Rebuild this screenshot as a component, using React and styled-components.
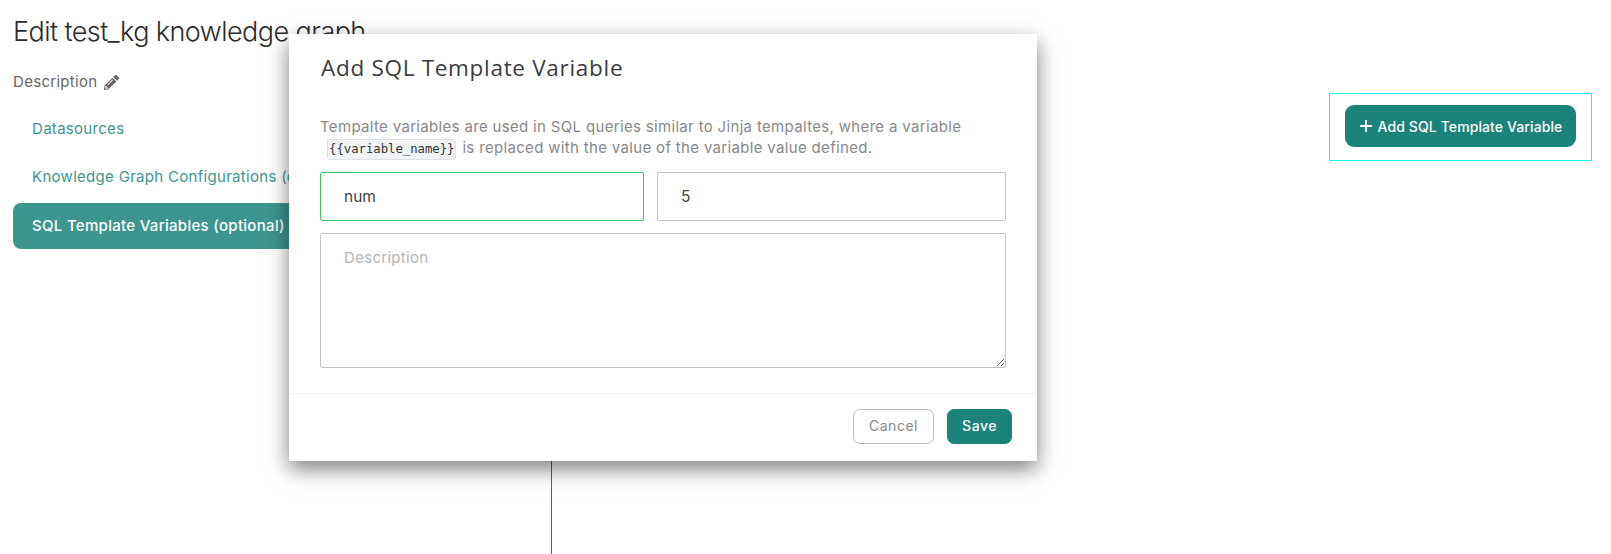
import styled, { createGlobalStyle } from 'styled-components'
import { Plus } from 'lucide-react'
import { FaPencilAlt } from 'react-icons/fa'

const colors = {
  primary: '#1b8377',
  tab: '#3d968d',
  link: '#3d968d',
  text: '#888888',
  border: '#c4c4c4',
}

const GlobalStyle = createGlobalStyle`
  html, body {
    margin: 0;
    padding: 0;
    background: #fff;
    font-family: Inter, 'Open Sans', sans-serif;
  }
  * {
    box-sizing: border-box;
  }
`

const Page = styled.div`
  position: relative;
  display: flex;
  width: 1611px;
  height: 554px;
  overflow: hidden;
`

const SidePanel = styled.div`
  display: flex;
  flex-direction: column;
  width: 551px;
  padding: 15px 0 0 13px;
`

const Title = styled.h1`
  margin: 0;
  color: #2c2c2c;
  font-size: 27px;
  line-height: 34px;
  font-weight: 300;
  letter-spacing: -0.57px;
  white-space: nowrap;
`

const DescriptionRow = styled.div`
  display: flex;
  align-items: center;
  gap: 7px;
  margin-top: 23px;
  color: #666;
  font-size: 15px;
  letter-spacing: 0.3px;
  line-height: 20px;
  svg {
    width: 15px;
    height: 15px;
  }
`

const Tabs = styled.div`
  display: flex;
  flex-direction: column;
  margin-top: 13px;
  width: 300px;
`

const Tab = styled.div`
  height: ${({ $active }) => ($active ? '46px' : '48px')};
  margin-top: ${({ $active }) => ($active ? '2px' : '0')};
  padding-left: 19px;
  border-radius: 8px;
  color: ${({ $active }) => ($active ? '#fff' : colors.link)};
  background: ${({ $active }) => ($active ? colors.tab : 'transparent')};
  font-size: 15px;
  font-weight: ${({ $active }) => ($active ? 500 : 400)};
  letter-spacing: 0.3px;
  line-height: ${({ $active }) => ($active ? '46px' : '48px')};
  white-space: nowrap;
`

const Canvas = styled.div`
  display: flex;
  flex: 1;
  justify-content: space-between;
`

const Connector = styled.div`
  align-self: flex-end;
  width: 1px;
  height: 94px;
  background: ${colors.primary};
`

const HighlightFrame = styled.div`
  align-self: flex-start;
  margin: 93px 19px 0 0;
  padding: 11px 15px 13px;
  border: 1px solid #19f5f5;
`

const AddButton = styled.button`
  display: flex;
  align-items: center;
  justify-content: center;
  gap: 3px;
  width: 231px;
  height: 42px;
  padding: 0 2px 0 0;
  border: 0;
  border-radius: 9px;
  background: ${colors.primary};
  color: #fff;
  font-family: inherit;
  font-size: 14px;
  font-weight: 500;
  letter-spacing: 0.1px;
`

const Modal = styled.div`
  position: absolute;
  top: 34px;
  left: 289px;
  display: flex;
  flex-direction: column;
  width: 748px;
  height: 427px;
  background: #fff;
  box-shadow: 0 8px 20px rgba(0, 0, 0, 0.5);
`

const ModalBody = styled.div`
  display: flex;
  flex: 1;
  flex-direction: column;
  padding: 0 31px;
`

const ModalTitle = styled.h2`
  margin: 17px 0 0 1px;
  color: #3c3c3c;
  font-family: 'Open Sans', sans-serif;
  font-size: 22.5px;
  line-height: 34px;
  font-weight: 400;
  letter-spacing: 0.7px;
`

const HelpText = styled.p`
  margin: 31px 0 0;
  color: ${colors.text};
  font-size: 15px;
  letter-spacing: 0.33px;
  line-height: 21px;
  white-space: nowrap;
`

const Code = styled.code`
  display: inline-block;
  margin: 0 6px 0 7px;
  padding: 0 1px;
  border: 1px solid #dcdfe3;
  border-radius: 3px;
  background: #f1f3f5;
  color: #333;
  font-family: 'DejaVu Sans Mono', monospace;
  font-size: 12.25px;
  letter-spacing: 0;
  line-height: 19px;
`

const FieldRow = styled.div`
  display: flex;
  gap: 13px;
  margin-top: 12px;
`

const TextInput = styled.input`
  flex: ${({ $valid }) => ($valid ? '0 0 324px' : '1')};
  min-width: 0;
  height: 49px;
  padding: 0 23px;
  border: 1px solid ${({ $valid }) => ($valid ? '#46c35f' : colors.border)};
  border-radius: 2px;
  outline: none;
  color: #444;
  font-family: inherit;
  font-size: 15.5px;
`

const TextArea = styled.textarea`
  display: block;
  width: 100%;
  height: 135px;
  margin-top: 12px;
  padding: 14px 23px;
  border: 1px solid ${colors.border};
  border-radius: 2px;
  outline: none;
  font-family: inherit;
  font-size: 15px;
  letter-spacing: 0.3px;
  &::placeholder {
    color: #b5b5b5;
  }
`

const ModalFooter = styled.div`
  display: flex;
  justify-content: flex-end;
  gap: 13px;
  height: 68px;
  padding: 15px 25px 0 0;
  border-top: 1px solid #f2f2f2;
`

const FooterButton = styled.button`
  width: ${({ $primary }) => ($primary ? '65px' : '81px')};
  height: 35px;
  padding: 0 0 2px;
  border: 1px solid ${({ $primary }) => ($primary ? colors.primary : '#bdbdbd')};
  border-radius: 7px;
  background: ${({ $primary }) => ($primary ? colors.primary : '#fff')};
  color: ${({ $primary }) => ($primary ? '#fff' : colors.text)};
  font-family: inherit;
  font-size: 14px;
  font-weight: ${({ $primary }) => ($primary ? 500 : 400)};
  letter-spacing: 0.5px;
`

function App() {
  return (
    <Page>
      <GlobalStyle />
      <SidePanel>
        <Title>Edit test_kg knowledge graph</Title>
        <DescriptionRow>
          Description <FaPencilAlt />
        </DescriptionRow>
        <Tabs>
          <Tab>Datasources</Tab>
          <Tab>Knowledge Graph Configurations (optional)</Tab>
          <Tab $active>SQL Template Variables (optional)</Tab>
        </Tabs>
      </SidePanel>
      <Canvas>
        <Connector />
        <HighlightFrame>
          <AddButton>
            <Plus size={18} strokeWidth={2.6} />
            Add SQL Template Variable
          </AddButton>
        </HighlightFrame>
      </Canvas>
      <Modal>
        <ModalBody>
          <ModalTitle>Add SQL Template Variable</ModalTitle>
          <HelpText>
            Tempalte variables are used in SQL queries similar to Jinja tempaltes, where a variable
            <br />
            <Code>{'{{variable_name}}'}</Code>
            is replaced with the value of the variable value defined.
          </HelpText>
          <FieldRow>
            <TextInput $valid value="num" readOnly />
            <TextInput value="5" readOnly />
          </FieldRow>
          <TextArea placeholder="Description" />
        </ModalBody>
        <ModalFooter>
          <FooterButton>Cancel</FooterButton>
          <FooterButton $primary>Save</FooterButton>
        </ModalFooter>
      </Modal>
    </Page>
  )
}

export default App
